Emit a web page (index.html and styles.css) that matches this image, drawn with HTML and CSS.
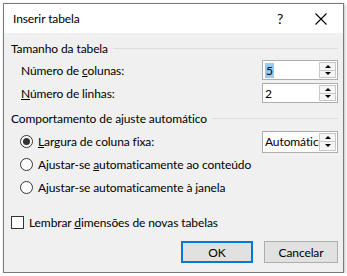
FILE: index.html
```html
<!DOCTYPE html>
<html lang="pt">
<head>
  <meta charset="UTF-8">
  <title>Inserir tabela</title>
  <link rel="stylesheet" href="styles.css">
</head>
<body>
  <div class="dialog">
    <!-- barra de título -->
    <div class="titlebar">
      <span class="title">Inserir tabela</span>
      <span class="help">?</span>
      <span class="close">
        <svg width="12" height="12" viewBox="0 0 12 12"><path d="M0.5 0.5 L11.5 11.5 M11.5 0.5 L0.5 11.5" stroke="#000" stroke-width="1.1" fill="none"/></svg>
      </span>
    </div>

    <div class="content">
      <div class="group-head"><span>Tamanho da tabela</span><i class="rule"></i></div>

      <div class="field-row">
        <span class="label">Número de <u>c</u>olunas:</span>
        <div class="spin">
          <span class="value"><span class="sel">5</span></span>
          <div class="arrows"><b class="up"></b><b class="down"></b></div>
        </div>
      </div>
      <div class="field-row">
        <span class="label"><u>N</u>úmero de linhas:</span>
        <div class="spin">
          <span class="value">2</span>
          <div class="arrows"><b class="up"></b><b class="down"></b></div>
        </div>
      </div>

      <div class="group-head second"><span>Comportamento de ajuste automático</span><i class="rule"></i></div>

      <div class="radio-row first">
        <span class="radio checked"></span>
        <span class="label"><u>L</u>argura de coluna fixa:</span>
        <div class="spin wide">
          <span class="value">Automático</span>
          <div class="arrows"><b class="up"></b><b class="down"></b></div>
        </div>
      </div>
      <div class="radio-row">
        <span class="radio"></span>
        <span class="label">Ajustar-se <u>a</u>utomaticamente ao conteúdo</span>
      </div>
      <div class="radio-row">
        <span class="radio"></span>
        <span class="label">Ajustar-se automaticamente à <u>j</u>anela</span>
      </div>

      <div class="check-row">
        <span class="check"></span>
        <span class="label">Lembrar <u>d</u>imensões de novas tabelas</span>
      </div>

      <div class="buttons">
        <button class="btn default">OK</button>
        <button class="btn">Cancelar</button>
      </div>
    </div>
  </div>
</body>
</html>
```

FILE: styles.css
```css
html, body {
  margin: 0;
  background: #ffffff;
}

body {
  font-family: 'Lato', 'Noto Sans', sans-serif;
  font-size: 12px;
  letter-spacing: -0.1px;
  color: #000000;
}

.dialog {
  margin: 3px 0 0 3px;
  width: 339px;
  height: 268px;
  border: 1px solid #7a7a7a;
  background: #f0f0f0;
  box-shadow: 1px 1px 3px rgba(0, 0, 0, 0.25);
  display: flex;
  flex-direction: column;
}

.titlebar {
  height: 29px;
  background: #ffffff;
  display: flex;
  align-items: center;
  padding-left: 9px;
}

.title {
  flex: 1;
}

.help {
  width: 20px;
  font-size: 14px;
  margin-right: 25px;
  text-align: center;
}

.close {
  width: 12px;
  height: 12px;
  margin-right: 16px;
  display: flex;
}

.content {
  padding: 7px 5px 0 7px;
  display: flex;
  flex-direction: column;
}

.group-head {
  height: 16px;
  display: flex;
  align-items: center;
  gap: 5px;
}

.group-head.second {
  margin-top: 7px;
}

.rule {
  flex: 1;
  height: 1px;
  background: #dcdcdc;
  margin-top: 1px;
}

.field-row {
  height: 20px;
  display: flex;
  align-items: center;
  padding-left: 10px;
  margin-top: 4px;
}

.field-row + .field-row {
  margin-top: 3px;
}

.field-row .label,
.radio-row .label {
  flex: 1;
}

.spin {
  width: 74px;
  height: 18px;
  border: 1px solid #adadad;
  background: #ffffff;
  display: flex;
  align-items: stretch;
}

.spin.wide {
  height: 20px;
}

.value {
  flex: 1;
  padding-left: 2px;
  display: flex;
  align-items: center;
  overflow: hidden;
  white-space: nowrap;
}

.sel {
  background: #99c9ef;
  color: #000000;
  padding: 0 1px;
}

.arrows {
  width: 15px;
  display: flex;
  flex-direction: column;
  margin: 1px 1px 1px 0;
  border: 1px solid #c8c8c8;
  background: #f5f5f5;
}

.arrows b {
  flex: 1;
  display: flex;
  align-items: center;
  justify-content: center;
}

.arrows b + b {
  border-top: 1px solid #c8c8c8;
}

.arrows b::before {
  content: '';
  border-left: 3px solid transparent;
  border-right: 3px solid transparent;
}

.arrows .up::before {
  border-bottom: 3px solid #000000;
}

.arrows .down::before {
  border-top: 3px solid #000000;
}

.radio-row {
  height: 23px;
  display: flex;
  align-items: center;
  padding-left: 9px;
}

.radio-row.first {
  margin-top: 4px;
}

.radio {
  width: 11px;
  height: 11px;
  border: 1px solid #333333;
  border-radius: 50%;
  background: #ffffff;
  margin-right: 5px;
  display: flex;
  align-items: center;
  justify-content: center;
}

.radio.checked::after {
  content: '';
  width: 7px;
  height: 7px;
  border-radius: 50%;
  background: #333333;
}

.check-row {
  height: 16px;
  display: flex;
  align-items: center;
  margin-top: 15px;
}

.check {
  width: 11px;
  height: 11px;
  border: 1px solid #333333;
  background: #ffffff;
  margin-right: 5px;
}

.buttons {
  display: flex;
  justify-content: flex-end;
  gap: 11px;
  margin-top: 11px;
}

.btn {
  width: 74px;
  height: 22px;
  font-family: inherit;
  font-size: 12px;
  letter-spacing: -0.1px;
  background: #e1e1e1;
  border: 1px solid #adadad;
  padding: 0;
  color: #000000;
}

.btn.default {
  width: 72px;
  border: 2px solid #0078d7;
}
```
